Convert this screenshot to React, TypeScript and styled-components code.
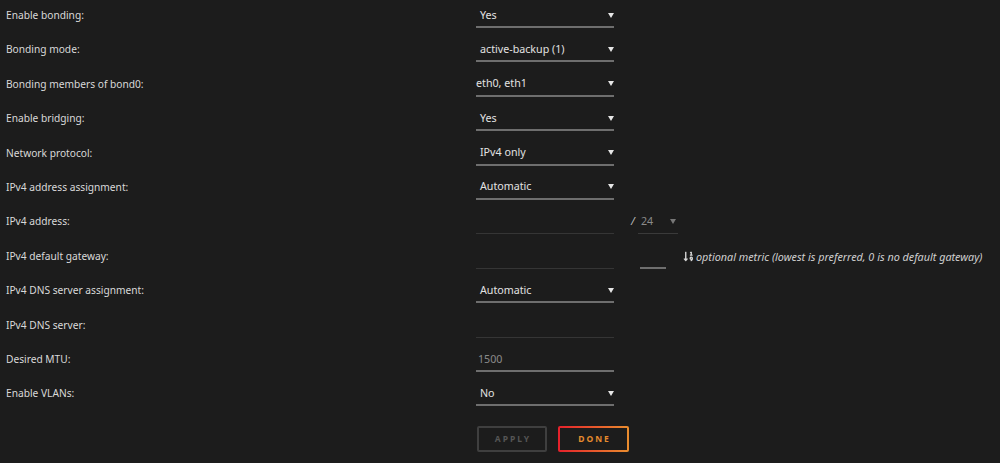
import React from "react";
import styled, { createGlobalStyle } from "styled-components";
import { FaSortNumericDown } from "react-icons/fa";

const Global = createGlobalStyle`
  html, body { margin: 0; padding: 0; background: #1c1c1c; }
  body { font-family: "Noto Sans", "DejaVu Sans", sans-serif; }
`;

const Page = styled.div`
  width: 1000px;
  height: 463px;
  background: #1c1c1c;
  color: #dcdcdc;
  font-size: 10.2px;
  padding-top: 3px;
  box-sizing: border-box;
  overflow: hidden;
`;

const Row = styled.div`
  display: grid;
  grid-template-columns: 476px auto;
  align-items: start;
  height: 34.4px;
`;

const Label = styled.div`
  padding-left: 6px;
  line-height: 25px;
  height: 25px;
  color: #d9d9d9;
`;

const Controls = styled.div`
  display: flex;
  align-items: flex-start;
  font-size: 10.7px;
`;

const Select = styled.div<{ $flush?: boolean }>`
  display: flex;
  align-items: center;
  justify-content: space-between;
  width: 138px;
  height: 25px;
  box-sizing: border-box;
  border-bottom: 2px solid #6e6e6e;
  line-height: 23px;
  padding-top: 1px;
  padding-left: ${(p) => (p.$flush ? "0" : "4px")};
  padding-right: 0;
  color: #e2e2e2;
`;

const Caret = styled.span<{ $dim?: boolean }>`
  width: 0;
  height: 0;
  border-left: 3px solid transparent;
  border-right: 3px solid transparent;
  border-top: 5px solid ${(p) => (p.$dim ? "#777" : "#e6e6e6")};
`;

const Input = styled.div<{ $bright?: boolean }>`
  width: 138px;
  height: 25px;
  box-sizing: border-box;
  border-bottom: ${(p) => (p.$bright ? "2px solid #6e6e6e" : "1px solid #353535")};
  line-height: 23px;
  padding-top: 1px;
  padding-left: 2px;
  color: #8a8a8a;
`;

const Slash = styled.span`
  margin-left: 17px;
  line-height: 25px;
  color: #bdbdbd;
  font-style: italic;
  width: 8px;
`;

const Prefix = styled.div`
  display: flex;
  align-items: center;
  justify-content: space-between;
  width: 40px;
  margin-left: -1px;
  height: 25px;
  box-sizing: border-box;
  border-bottom: 1px solid #3a3a3a;
  line-height: 23px;
  padding: 1px 2px 0 3px;
  color: #8a8a8a;
`;

const Metric = styled.div`
  width: 26px;
  margin-left: 26px;
  height: 25px;
  box-sizing: border-box;
  border-bottom: 2px solid #6e6e6e;
`;

const Hint = styled.div`
  display: flex;
  align-items: center;
  gap: 2px;
  margin-left: 17px;
  height: 25px;
  font-size: 10.8px;
  font-style: italic;
  color: #cfcfcf;
  svg { color: #d6d6d6; }
`;

const Buttons = styled.div`
  display: flex;
  gap: 11px;
  padding-left: 477px;
  margin-top: 10px;
`;

const Button = styled.button<{ $primary?: boolean }>`
  width: ${(p) => (p.$primary ? 71 : 70)}px;
  height: 26px;
  font-family: "Noto Sans", "DejaVu Sans", sans-serif;
  font-weight: 700;
  font-size: 8.5px;
  letter-spacing: 2px;
  padding: 0 0 0 2px;
  border: 2px solid ${(p) => (p.$primary ? "transparent" : "#3f3f3f")};
  color: ${(p) => (p.$primary ? "#e58a2e" : "#555")};
  background: ${(p) =>
    p.$primary
      ? "linear-gradient(#1c1c1c, #1c1c1c) padding-box, linear-gradient(90deg, #e5202b, #ea8d2e) border-box"
      : "#1c1c1c"};
  border-radius: 2px;
`;

type R = { label: string; control: React.ReactNode };

const rows: R[] = [
  { label: "Enable bonding:", control: <Select><span>Yes</span><Caret /></Select> },
  { label: "Bonding mode:", control: <Select><span>active-backup (1)</span><Caret /></Select> },
  { label: "Bonding members of bond0:", control: <Select $flush><span>eth0, eth1</span><Caret /></Select> },
  { label: "Enable bridging:", control: <Select><span>Yes</span><Caret /></Select> },
  { label: "Network protocol:", control: <Select><span>IPv4 only</span><Caret /></Select> },
  { label: "IPv4 address assignment:", control: <Select><span>Automatic</span><Caret /></Select> },
  {
    label: "IPv4 address:",
    control: (
      <>
        <Input />
        <Slash>/</Slash>
        <Prefix><span>24</span><Caret $dim /></Prefix>
      </>
    ),
  },
  {
    label: "IPv4 default gateway:",
    control: (
      <>
        <Input />
        <Metric />
        <Hint>
          <FaSortNumericDown size={11} />
          optional metric (lowest is preferred, 0 is no default gateway)
        </Hint>
      </>
    ),
  },
  { label: "IPv4 DNS server assignment:", control: <Select><span>Automatic</span><Caret /></Select> },
  { label: "IPv4 DNS server:", control: <Input /> },
  { label: "Desired MTU:", control: <Input $bright>1500</Input> },
  { label: "Enable VLANs:", control: <Select><span>No</span><Caret /></Select> },
];

export default function App() {
  return (
    <>
      <Global />
      <Page>
        {rows.map((r) => (
          <Row key={r.label}>
            <Label>{r.label}</Label>
            <Controls>{r.control}</Controls>
          </Row>
        ))}
        <Buttons>
          <Button>APPLY</Button>
          <Button $primary>DONE</Button>
        </Buttons>
      </Page>
    </>
  );
}
